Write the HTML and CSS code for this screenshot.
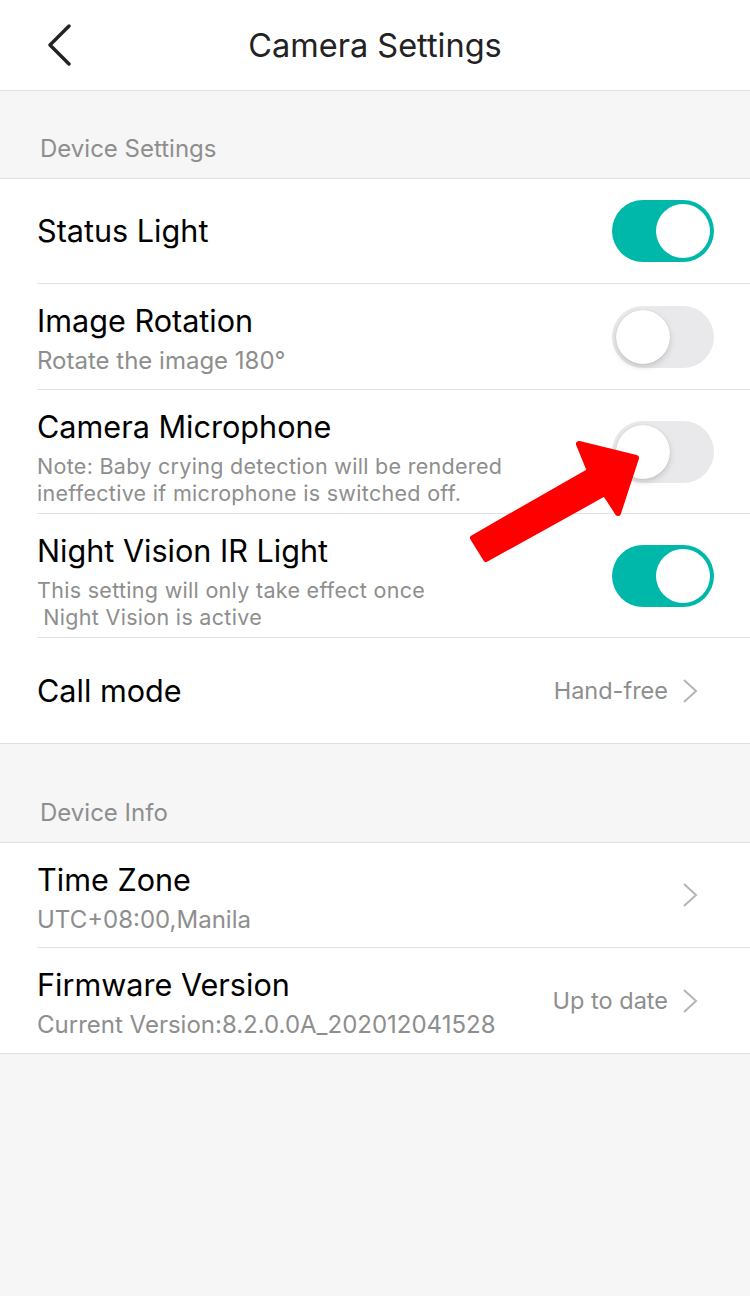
FILE: index.html
```html
<!DOCTYPE html>
<html lang="en">
<head>
    <meta charset="UTF-8">
    <meta name="viewport" content="width=device-width, initial-scale=1.0">
    <title>Camera Settings</title>
    <link rel="stylesheet" href="styles.css">
</head>
<body>

    <!-- Thanh tiêu đề -->
    <header class="navbar">
        <button class="back-btn" aria-label="Back">
            <svg width="26" height="42" viewBox="0 0 26 42">
                <polyline points="23,2 4,21 23,40" fill="none" stroke="#222" stroke-width="3.4" stroke-linecap="round" stroke-linejoin="round"/>
            </svg>
        </button>
        <h1 class="nav-title">Camera Settings</h1>
        <span></span>
    </header>

    <!-- Cài đặt thiết bị -->
    <div class="section-label">Device Settings</div>
    <div class="group">
        <div class="row row-single">
            <div class="row-text">
                <div class="row-title">Status Light</div>
            </div>
            <span class="toggle on"></span>
        </div>
        <div class="row">
            <div class="row-text">
                <div class="row-title">Image Rotation</div>
                <div class="row-sub row-sub-lg">Rotate the image 180°</div>
            </div>
            <span class="toggle"></span>
        </div>
        <div class="row">
            <div class="row-text">
                <div class="row-title">Camera Microphone</div>
                <div class="row-sub">Note: Baby crying detection will be rendered<br>ineffective if microphone is switched off.</div>
            </div>
            <span class="toggle"></span>
        </div>
        <div class="row">
            <div class="row-text">
                <div class="row-title">Night Vision IR Light</div>
                <div class="row-sub">This setting will only take effect once<br>&nbsp;Night Vision is active</div>
            </div>
            <span class="toggle on"></span>
        </div>
        <div class="row row-single row-link">
            <div class="row-text">
                <div class="row-title">Call mode</div>
            </div>
            <span class="row-value">Hand-free</span>
            <svg class="chevron" width="16" height="26" viewBox="0 0 16 26">
                <polyline points="2,2 14,13 2,24" fill="none" stroke="#b5b5b5" stroke-width="2"/>
            </svg>
        </div>
    </div>

    <!-- Thông tin thiết bị -->
    <div class="section-label section-label-2">Device Info</div>
    <div class="group">
        <div class="row row-link">
            <div class="row-text">
                <div class="row-title">Time Zone</div>
                <div class="row-sub row-sub-lg">UTC+08:00,Manila</div>
            </div>
            <svg class="chevron" width="16" height="26" viewBox="0 0 16 26">
                <polyline points="2,2 14,13 2,24" fill="none" stroke="#b5b5b5" stroke-width="2"/>
            </svg>
        </div>
        <div class="row row-link">
            <div class="row-text">
                <div class="row-title">Firmware Version</div>
                <div class="row-sub row-sub-lg">Current Version:8.2.0.0A_202012041528</div>
            </div>
            <span class="row-value">Up to date</span>
            <svg class="chevron" width="16" height="26" viewBox="0 0 16 26">
                <polyline points="2,2 14,13 2,24" fill="none" stroke="#b5b5b5" stroke-width="2"/>
            </svg>
        </div>
    </div>

    <!-- Mũi tên chú thích -->
    <svg class="annotation" width="750" height="1296" viewBox="0 0 750 1296">
        <polygon points="473,538 590,471 579,444 636,458 618,513 605,493 486,559" fill="#ff0000" stroke="#ff0000" stroke-width="6" stroke-linejoin="round"/>
    </svg>

</body>
</html>
```

FILE: styles.css
```css
body {
    margin: 0;
    padding: 0;
    background-color: #f6f6f6;
    font-family: Inter, "Liberation Sans", sans-serif;
    min-height: 1296px;
    position: relative;
}

/* Thanh tiêu đề */
.navbar {
    height: 90px;
    background-color: #fff;
    border-bottom: 1px solid #e1e1e1;
    display: grid;
    grid-template-columns: 1fr auto 1fr;
    align-items: center;
}

.back-btn {
    background: none;
    border: none;
    padding: 0 0 0 46px;
    display: flex;
    align-items: center;
    cursor: pointer;
}

.nav-title {
    margin: 0;
    font-size: 32.5px;
    font-weight: 400;
    color: #222;
}

/* Tiêu đề nhóm */
.section-label {
    height: 87px;
    box-sizing: border-box;
    display: flex;
    align-items: flex-end;
    padding: 0 0 14px 40px;
    font-size: 24px;
    line-height: 30px;
    color: #8e8e8e;
}

.section-label-2 {
    height: 98px;
}

.group {
    background-color: #fff;
    border-top: 1px solid #e1e1e1;
    border-bottom: 1px solid #e1e1e1;
    padding-left: 37px;
}

.row {
    display: flex;
    align-items: flex-start;
    padding-right: 36px;
    min-height: 106px;
    box-sizing: border-box;
    border-bottom: 1px solid #e1e1e1;
}

.row:first-child {
    min-height: 105px;
}

.row:last-child {
    border-bottom: none;
    min-height: 105px;
}

.row-single {
    align-items: center;
}

.row-link {
    padding-right: 52px;
}

.row-text {
    flex: 1;
    padding: 19px 0 6px;
}

.row-single .row-text {
    padding: 0;
}

.row-title {
    font-size: 30.6px;
    line-height: 36px;
    color: #000;
}

.row-sub {
    margin-top: 8px;
    font-size: 21.5px;
    line-height: 27px;
    color: #8e8e8e;
    letter-spacing: 0.3px;
}

.row-sub-lg {
    font-size: 24px;
    letter-spacing: 0;
}

.row-value {
    align-self: center;
    font-size: 23.5px;
    color: #8e8e8e;
    margin-right: 14px;
}

.chevron {
    align-self: center;
}

/* Công tắc */
.toggle {
    align-self: center;
    width: 102px;
    height: 62px;
    border-radius: 31px;
    background-color: #e9e9eb;
    position: relative;
    flex-shrink: 0;
}

.toggle::after {
    content: "";
    position: absolute;
    top: 4px;
    left: 4px;
    width: 54px;
    height: 54px;
    border-radius: 50%;
    background-color: #fff;
    box-shadow: 0 3px 6px rgba(0, 0, 0, 0.15), 0 0 1px rgba(0, 0, 0, 0.2);
}

.toggle.on {
    background-color: #00b8a9;
}

.toggle.on::after {
    left: 44px;
    box-shadow: none;
}

/* Mũi tên */
.annotation {
    position: absolute;
    top: 0;
    left: 0;
    pointer-events: none;
}
```
